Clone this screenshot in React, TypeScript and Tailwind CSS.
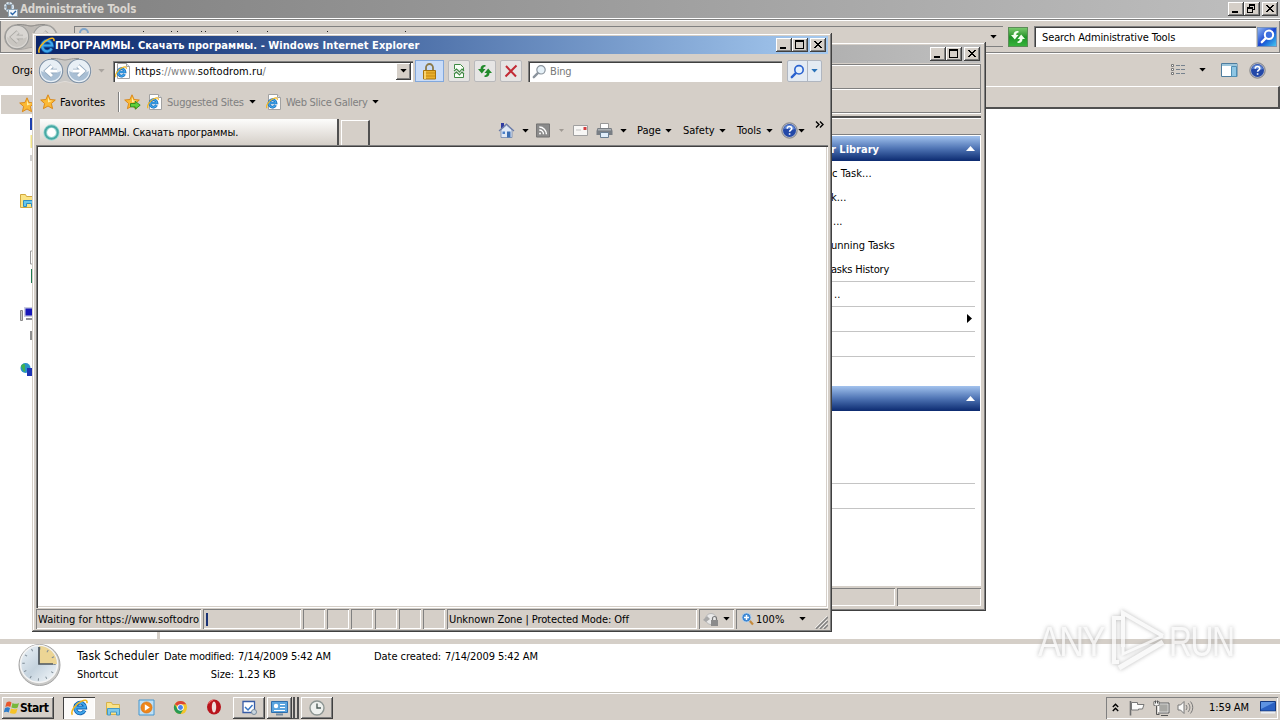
import React, { type ReactNode } from "react";
import clsx from "clsx";

const raised =
  "bg-[#d5cfc8] shadow-[inset_-1px_-1px_#404040,inset_1px_1px_#ffffff,inset_-2px_-2px_#808080]";
const frame =
  "bg-[#d5cfc8] shadow-[inset_-1px_-1px_#404040,inset_1px_1px_#d5cfc8,inset_-2px_-2px_#808080,inset_2px_2px_#ffffff]";
const sunken =
  "shadow-[inset_1px_1px_#808080,inset_-1px_-1px_#ffffff]";

function T({ c, flat, children }: { c?: string; flat?: boolean; children: ReactNode }) {
  return <span className={clsx("block shrink-0 whitespace-pre", !flat && "translate-y-px", c)}>{children}</span>;
}

function Tri({ c, color = "#000" }: { c?: string; color?: string }) {
  return (
    <svg className={clsx("block shrink-0", c)} width="7" height="4" viewBox="0 0 7 4">
      <path d="M0.3 0H6.7L3.5 3.6Z" fill={color} />
    </svg>
  );
}

function CaptionButton({ kind, c }: { kind: "min" | "max" | "restore" | "close"; c?: string }) {
  return (
    <div className={clsx("h-[14px] w-4 shrink-0", raised, c)}>
      <svg className="block" width="16" height="14" viewBox="0 0 16 14" fill="none" shapeRendering="crispEdges">
        {kind === "min" && <path d="M4 9h6v2H4z" fill="#000" />}
        {kind === "max" && <path d="M3 2h9v9H3zM4 4v6h7V4z" fill="#000" fillRule="evenodd" />}
        {kind === "restore" && (
          <path d="M5 2h6v6H9V7h1V4H6v1H5zM3 5h6v6H3zM4 7v3h4V7z" fill="#000" fillRule="evenodd" />
        )}
        {kind === "close" && (
          <path d="M4 3h2v1h1v1h2V4h1V3h2v1h-1v1h-1v1H9v1h1v1h1v1h1v1h-2V9H9V8H7v1H6v1H4V9h1V8h1V7h1V6H6V5H5V4H4z" fill="#000" />
        )}
      </svg>
    </div>
  );
}

function EGlyph({ x = 0, y = 0, s = 1 }: { x?: number; y?: number; s?: number }) {
  return (
    <g transform={`translate(${x} ${y}) scale(${s})`}>
      <path d="M12.800 10.800A4.700 5 0 1 1 13.300 8H4.800" fill="none" stroke="#0f5fae" strokeWidth="3.600" />
      <path d="M12.800 10.800A4.700 5 0 1 1 13.300 8H4.800" fill="none" stroke="#3fa5ea" strokeWidth="2" />
      <path d="M1.300 14.800C-.8 11.600 4.200 4.600 10 2c3.200-1.500 5.600-1.200 5 1.800" fill="none" stroke="#f2b51d" strokeWidth="1.500" />
    </g>
  );
}

function EIcon({ c, size = 17 }: { c?: string; size?: number }) {
  return (
    <svg className={clsx("block shrink-0", c)} width={size} height={size} viewBox="0 0 16 16">
      <EGlyph />
    </svg>
  );
}

function EPage({ c }: { c?: string }) {
  return (
    <svg className={clsx("block shrink-0", c)} width="16" height="16" viewBox="0 0 16 16">
      <path d="M2.500.5h9l3 3v12h-12z" fill="#fff" stroke="#a2a2a2" />
      <path d="M11.500.5v3h3" fill="#dde6ee" stroke="#a2a2a2" />
      <EGlyph x={0} y={3} s={0.75} />
    </svg>
  );
}

function Star({ c, arrow }: { c?: string; arrow?: boolean }) {
  return (
    <svg className={clsx("block shrink-0", c)} width="17" height="16" viewBox="0 0 17 16">
      <path
        d="M8 .8l2.100 4.700 5.200.5-3.900 3.500 1.200 5.200L8 12l-4.600 2.700 1.200-5.200L.7 6l5.200-.5z"
        fill="#fbb934"
        stroke="#d98311"
        strokeWidth=".9"
      />
      <path d="M8 3l1.300 3.500 3.200.3-4.500 1.700z" fill="#fff1a8" />
      {arrow && <path d="M6.500 9.500h4.700V7.200l5 4-5 4v-2.300H6.500z" fill="#5fd03a" stroke="#1f7d17" strokeWidth=".8" />}
    </svg>
  );
}

function NavCircles({ dim, c }: { dim?: boolean; c?: string }) {
  const rim = dim ? "#9a9a98" : "#7d90a5";
  const inner = dim ? "#c9c6c1" : "#a9bfd4";
  return (
    <svg className={clsx("block shrink-0", c)} width="54" height="28" viewBox="0 0 54 28">
      <path d="M13 1.500C22 1.500 24 3 27 3s5-1.500 14-1.500a12.500 12.500 0 0 1 0 25c-9 0-11-2-14-2s-5 2-14 2a12.500 12.500 0 0 1 0-25z" fill={dim ? "#bdb9b4" : "#c9c8c6"} stroke={dim ? "#a3a09c" : "#e4e1dd"} strokeWidth=".8" />
      <path d="M13 1.500C22 1.500 24 3 27 3s5-1.500 14-1.500" fill="none" stroke="#8f8d8a" strokeWidth="1" />
      {[13, 41].map((cx, i) => (
        <g key={cx}>
          <circle cx={cx} cy="14" r="11.700" fill={dim ? "#d9d6d2" : "#e8eff5"} stroke={rim} strokeWidth="1.100" />
          <path d={`M${cx - 10} 14a10 10 0 0 0 20 0c-5 3-15 3-20 0z`} fill={inner} />
          <path
            d={i === 0 ? `M${cx + 6} 14H${cx - 4}M${cx + 1} 9L${cx - 4.500} 14l5.500 5` : `M${cx - 6} 14H${cx + 4}M${cx - 1} 9L${cx + 4.500} 14l-5.500 5`}
            stroke={dim ? "#aaa8a4" : "#93a9be"}
            strokeWidth="4.600"
            fill="none"
          />
          <path
            d={i === 0 ? `M${cx + 6} 14H${cx - 4}M${cx + 1} 9L${cx - 4.500} 14l5.500 5` : `M${cx - 6} 14H${cx + 4}M${cx - 1} 9L${cx + 4.500} 14l-5.500 5`}
            stroke={dim ? "#d6d3cf" : "#fff"}
            strokeWidth="3"
            fill="none"
          />
        </g>
      ))}
    </svg>
  );
}

function Help({ c }: { c?: string }) {
  return (
    <svg className={clsx("block shrink-0", c)} width="17" height="17" viewBox="0 0 17 17">
      <circle cx="8.500" cy="8.500" r="7.700" fill="#b9bdcc" stroke="#77797f" strokeWidth=".9" />
      <circle cx="8.500" cy="8.500" r="6.500" fill="#2348a8" />
      <path d="M3 7a5.700 5.700 0 0 1 11 0C10 9 7 5 3 7z" fill="#5f86d4" />
      <path d="M6.200 6.700c0-2.800 4.600-2.800 4.600-.3 0 1.800-2.200 1.700-2.200 3.400M8.600 11.200v1.600" stroke="#fff" strokeWidth="1.600" fill="none" />
    </svg>
  );
}

function Magnifier({ c, stroke = "#2a62cf", fill = "#e4f0fc", width = 1.600 }: { c?: string; stroke?: string; fill?: string; width?: number }) {
  return (
    <svg className={clsx("block shrink-0", c)} width="15" height="15" viewBox="0 0 15 15">
      <path d="M6.300 8.700L1.800 13.200" stroke={stroke} strokeWidth="2.400" strokeLinecap="round" />
      <circle cx="9" cy="5.800" r="4.200" fill={fill} stroke={stroke} strokeWidth={width} />
    </svg>
  );
}

function Refresh({ color }: { color: string }) {
  return (
    <svg className="block" width="16" height="16" viewBox="0 0 16 16" fill={color}>
      <path d="M8.500 2C5.500 1.500 3.600 3 3.500 6H1l3.800 4.500L8.500 6H6.200C6.300 4.500 7 3.500 8.500 3.500z" />
      <path d="M7.500 14c3 .5 4.900-1 5-4H15l-3.800-4.500L7.500 10h2.300c-.1 1.500-.8 2.500-2.300 2.500z" />
    </svg>
  );
}

function ToolButton({ c, children }: { c?: string; children: ReactNode }) {
  return (
    <div className={clsx("flex h-[22px] w-[22px] shrink-0 items-center justify-center rounded-[2px] border border-[#b9b9bb] bg-[#e6e5e4]", c)}>
      {children}
    </div>
  );
}

function Explorer() {
  return (
    <div className="flex h-[692px] w-[1280px] flex-col bg-white">
      <div className="flex h-[18px] shrink-0 items-center bg-linear-to-r from-[#7f7f7f] to-[#bfbfbf] pl-[3px] pr-[2px]">
        <svg width="15" height="16" viewBox="0 0 15 16" className="shrink-0">
          <circle cx="6" cy="6" r="3.800" fill="none" stroke="#dbe8f2" strokeWidth="2.500" strokeDasharray="2.200 .8" />
          <circle cx="6" cy="6" r="3" fill="none" stroke="#8ea8bd" />
          <path d="M5.500 8.500h9v7h-9z" fill="#f4f8fb" stroke="#8fa5b5" />
          <path d="M7.500 11.500l2 2 3.500-3.500" fill="none" stroke="#2c66a8" strokeWidth="1.400" />
        </svg>
        <T flat c="ml-[2px] w-[1200px] text-[11.500px] font-bold tracking-[-0.150px] text-[#dad6d0]">Administrative Tools</T>
        <div className="ml-auto flex">
          <CaptionButton kind="min" />
          <CaptionButton kind="restore" />
          <CaptionButton kind="close" c="ml-[2px]" />
        </div>
      </div>
      <div className="mt-px flex h-[35px] shrink-0 items-center border-y border-t-[#808080] border-b-white bg-[#d5cfc8] pr-[3px] shadow-[inset_0_1px_#ffffff,inset_1px_0_#808080,inset_-1px_0_#808080,inset_0_-1px_#808080]">
        <NavCircles dim c="ml-[4px]" />
        <div className="ml-4 flex h-[21px] w-[929px] items-center border border-r-0 border-[#808080] pl-1">
          <svg width="900" height="20" viewBox="0 0 900 20" className="shrink-0" fill="#222">
            <circle cx="5" cy="6" r="4" fill="none" stroke="#7da4cb" strokeWidth="2" />
            {[64, 92, 98, 122, 126, 158, 188, 248, 326].map((x) => (
              <path key={x} d={`M${x} 4h1v1h-1z`} />
            ))}
          </svg>
          <Tri c="ml-[11px]" />
        </div>
        <div className="ml-[5px] flex h-5 w-5 items-center justify-center border border-[#5b8b57] bg-linear-to-b from-[#77c86c] via-[#1e9427] to-[#35b33a]">
          <Refresh color="#f3fff0" />
        </div>
        <div className="ml-[6px] flex h-[21px] w-[222px] items-center bg-white pl-[8px] shadow-[inset_1px_1px_#808080,inset_2px_2px_#404040,inset_-1px_-1px_#fff]">
          <T c="tracking-[-0.120px]">Search Administrative Tools</T>
        </div>
        <div className="ml-px flex h-5 w-[20px] shrink-0 items-center justify-center border border-[#7c94b8] bg-linear-to-br from-[#92b3ef] via-[#1e45d0] to-[#49c4ee]">
          <Magnifier stroke="#ffffff" fill="#3d6fe0" width={2} />
        </div>
      </div>
      <div className="flex h-[32px] shrink-0 items-center bg-[#d5cfc8] pl-3">
        <T c="w-[1156px]">Organize</T>
        <svg width="17" height="14" viewBox="0 0 17 14" className="ml-[2px] shrink-0" fill="none" stroke="#777">
          <path d="M1.500 1.500h2v2h-2zM1.500 5.500h2v2h-2zM1.500 9.500h2v2h-2z" fill="#fff" />
          <path d="M6 2.500h4M11 2.500h4M6 6.500h4M11 6.500h4M6 10.500h4M11 10.500h4" stroke="#76828e" />
        </svg>
        <Tri c="ml-[12px]" />
        <svg width="17" height="15" viewBox="0 0 17 15" className="ml-[15px] shrink-0">
          <path d="M.5.5h15.500v13H.5z" fill="#fff" stroke="#4e7d9e" />
          <path d="M1 1h15v2H1z" fill="#9cc6dc" />
          <path d="M10.500 3.500h5v10h-5z" fill="#8ec6e4" stroke="#4e8fb5" />
        </svg>
        <Help c="ml-[11px]" />
      </div>
      <div className="flex min-h-0 flex-1">
        <div className="w-[160px] shrink-0">
          <div className="ml-px mt-[9px] flex h-[19px] items-center bg-[#d5cfc8] pl-[18px]">
            <Star />
          </div>
          <svg width="40" height="270" viewBox="0 0 40 270" className="block">
            <path d="M30 4h3v12h-3z" fill="#1d3fae" />
            <path d="M30.500 21h3v13h-3z" fill="#f1e58a" />
            <path d="M30 41h3v6h-3z" fill="#d0d0d0" />
            <path d="M20.500 80.500h5l1 2h8v11h-14z" fill="#fbe484" stroke="#d2a83e" />
            <path d="M23.500 86.500h11v6h-3v-3h-5v3h-3z" fill="#66c6ec" stroke="#2f8cc0" />
            <path d="M30.500 137v13h3v-13z" fill="#fff" stroke="#9a9a9a" />
            <path d="M31 155h2v14h-2z" fill="#1f7a50" />
            <path d="M20.500 196.500h2v10h-2z" fill="#c8c8c8" stroke="#888" />
            <path d="M24 193h10v10H24z" fill="#c9ccdf" />
            <path d="M25.500 194.500h8v7h-8z" fill="#1616b8" />
            <path d="M26 204h7v2h-7z" fill="#8d8d96" />
            <path d="M30 217h3v9h-3z" fill="#8e8e8e" />
            <circle cx="25.500" cy="254" r="5" fill="#2992c8" />
            <path d="M21 252c3-4 5-1 4 1s2 4-1 5z" fill="#3fb24e" />
            <path d="M27 254h7v8h-7z" fill="#1d33b4" />
          </svg>
        </div>
        <div className="flex-1">
          <div className="h-[23px] border-b-2 border-r-2 border-t border-b-[#505050] border-r-[#505050] border-t-white bg-[#d5cfc8]" />
        </div>
      </div>
      <div className="flex h-[8px] shrink-0 pl-[157px]">
        <div className="w-[3px] bg-[#d5cfc8]" />
      </div>
      <div className="h-[5px] shrink-0 bg-[#d5cfc8]" />
      <div className="flex h-[48px] shrink-0">
        <svg width="44" height="44" viewBox="0 0 44 44" className="-mt-px ml-[17px] shrink-0">
          <defs>
            <linearGradient id="face" x1="0" y1="0" x2="1" y2="1">
              <stop offset="0" stopColor="#eef4f9" />
              <stop offset=".5" stopColor="#c5d3de" />
              <stop offset="1" stopColor="#f8fbfd" />
            </linearGradient>
          </defs>
          <circle cx="22.500" cy="22" r="20.500" fill="#c9c9c7" stroke="#a4a4a4" />
          <circle cx="22" cy="21" r="18.500" fill="url(#face)" stroke="#f5f5f5" strokeWidth="1.500" />
          <path d="M22 21V3a18 18 0 0 1 18 18z" fill="#ecd595" />
          <circle cx="22" cy="21" r="15.500" fill="none" stroke="#7f8c96" strokeWidth="2.500" strokeDasharray="1 7.115" />
          <path d="M22 4v17h14" fill="none" stroke="#4c555d" strokeWidth="1.700" />
        </svg>
        <div className="ml-[16px] w-[82px] shrink-0 pt-1">
          <T flat c="h-[18px] text-[12px] leading-[17px] tracking-[0.100px]">Task Scheduler</T>
          <T flat c="h-[18px] leading-[17px] tracking-[-0.150px]">Shortcut</T>
        </div>
        <div className="ml-[1px] w-[74px] shrink-0 pt-1 text-right">
          <T flat c="h-[18px] leading-[17px] tracking-[-0.250px]">Date modified:</T>
          <T flat c="h-[18px] leading-[17px] tracking-[-0.100px]">Size:</T>
        </div>
        <div className="ml-1 w-[136px] shrink-0 pt-1">
          <T flat c="h-[18px] leading-[17px] tracking-[-0.100px]">7/14/2009 5:42 AM</T>
          <T flat c="h-[18px] leading-[17px] tracking-[-0.100px]">1.23 KB</T>
        </div>
        <T flat c="w-[71px] pt-1 leading-[17px] tracking-[-0.050px]">Date created:</T>
        <T flat c="pt-1 leading-[17px] tracking-[-0.100px]">7/14/2009 5:42 AM</T>
      </div>
    </div>
  );
}

function ActionHeader({ title }: { title: string }) {
  return (
    <div className="flex h-[25px] shrink-0 items-center bg-linear-to-b from-[#a3c3ee] via-[#4f74b4] to-[#0c2a70] text-white">
      <T c="w-[132px] text-[11px] font-bold">{title}</T>
      <svg width="9" height="5" viewBox="0 0 9 5" className="ml-[3px]">
        <path d="M0 5L4.500 0 9 5z" fill="#fff" />
      </svg>
    </div>
  );
}

function SchedulerWindow() {
  const row = "h-6 leading-[24px]";
  return (
    <div className={clsx("absolute left-[820px] top-[42px] flex h-[569px] w-[166px] flex-col p-[3px] pr-[5px]", frame)}>
      <div className="flex h-[18px] shrink-0 items-center justify-end bg-linear-to-r from-[#b0b0b0] to-[#bfbfbf] pr-px">
        <CaptionButton kind="min" />
        <CaptionButton kind="max" />
        <CaptionButton kind="close" c="ml-[2px]" />
      </div>
      <div className="mt-px h-[25px] shrink-0 border-b border-r border-t border-[#808080] shadow-[inset_0_1px_#ffffff]" />
      <div className="h-6 shrink-0 border-b border-r border-[#808080] shadow-[inset_0_1px_#ffffff,0_1px_#ffffff]" />
      <div className="mt-[3px] h-[19px] shrink-0 border-b border-t-2 border-b-[#808080] border-t-[#505050] shadow-[inset_0_1px_#ffffff]" />
      <div className="flex h-[451px] shrink-0 flex-col border-r border-t border-white bg-white pl-[8px] shadow-[0_1px_#d5cfc8]">
        <ActionHeader title="r Library" />
        <div className="mr-[5px]">
          <T c={clsx(row, "pl-px tracking-[0.060px]")}>c Task...</T>
          <T c={clsx(row, "tracking-[0.100px]")}>k...</T>
          <T c={clsx(row, "pl-[2px]")}>...</T>
          <T c={row}>unning Tasks</T>
          <T c={clsx(row, "tracking-[-0.200px]")}>asks History</T>
          <T flat c="h-[25px] border-t border-[#c4c4c4] pl-[3px] leading-[25px]">..</T>
          <div className="flex h-[25px] items-center justify-end border-t border-[#c4c4c4] pb-px pr-[3px]">
            <svg width="5" height="9" viewBox="0 0 5 9">
              <path d="M0 0l5 4.500L0 9z" fill="#000" />
            </svg>
          </div>
          <div className="h-[25px] border-t border-[#c4c4c4]" />
          <div className="h-[30px] border-t border-[#c4c4c4]" />
        </div>
        <ActionHeader title="" />
        <div className="mr-[5px] mt-[72px] h-[26px] shrink-0 border-y border-[#c4c4c4]" />
      </div>
      <div className="mt-[2px] flex h-[18px] shrink-0 gap-[2px]">
        <div className={clsx("w-[72px]", sunken)} />
        <div className={clsx("flex-1", sunken)} />
      </div>
    </div>
  );
}

function StatusCell({ c, children }: { c: string; children?: ReactNode }) {
  return <div className={clsx("mr-[2px] flex h-[20px] shrink-0 items-center overflow-hidden", sunken, c)}>{children}</div>;
}

function BrowserWindow() {
  return (
    <div className={clsx("absolute left-[32px] top-[33px] flex h-[599px] w-[800px] flex-col p-[3px] pl-[4px] pr-[4px]", frame)}>
      <div className="flex h-[18px] shrink-0 items-center bg-linear-to-r from-[#0a246a] to-[#a6caf0] pl-[2px] pr-[2px]">
        <EIcon />
        <T c="w-[600px] text-[11px] font-bold tracking-[0.060px] text-white">ПРОГРАММЫ. Скачать программы. - Windows Internet Explorer</T>
        <div className="ml-auto flex">
          <CaptionButton kind="min" />
          <CaptionButton kind="max" />
          <CaptionButton kind="close" c="ml-[2px]" />
        </div>
      </div>

      <div className="flex h-[34px] shrink-0 items-center pl-[2px]">
        <NavCircles />
        <Tri c="ml-[6px]" color="#aaa5a0" />
        <div className="ml-[8px] flex h-[21px] w-[300px] items-center bg-white pl-[2px] pr-[2px] shadow-[inset_1px_1px_#808080,inset_2px_2px_#404040,inset_-1px_-1px_#fff]">
          <EPage />
          <T c="ml-[4px] flex-1 tracking-[0.080px] text-[#808080]">
            <span className="text-black">https</span>://www.<span className="text-black">softodrom.ru</span>/
          </T>
          <div className={clsx("flex h-[17px] w-[15px] items-center justify-center", raised)}>
            <Tri />
          </div>
        </div>
        <div className="ml-[2px] flex h-[22px] w-[29px] items-center justify-center border border-[#82a8dc] bg-[#c9dcf8]">
          <svg width="15" height="17" viewBox="0 0 15 17">
            <path d="M4 8V4.500a3.500 3.500 0 0 1 7 0V8" fill="none" stroke="#8b7a4a" strokeWidth="1.800" />
            <path d="M1.500 7.500h12v8.500h-12z" fill="#eab02c" stroke="#a8730c" />
            <path d="M2 10h11M2 13h11" stroke="#c78a14" />
            <path d="M3 8v8" stroke="#ffe38a" strokeWidth="1.500" />
          </svg>
        </div>
        <ToolButton c="ml-[4px]">
          <svg width="14" height="16" viewBox="0 0 14 16" fill="none" stroke="#3e8a43">
            <path d="M2.500 6V1.500h6l3 3V7M2.500 11v3.500h9V11" fill="#f7fff6" />
            <path d="M2 8l2.500-2 3 3 2.500-3 2 2M2 11l2.500-2 3 3 2.500-3 2 2" strokeWidth="1.100" />
          </svg>
        </ToolButton>
        <ToolButton c="ml-[4px]">
          <Refresh color="#228a2b" />
        </ToolButton>
        <ToolButton c="ml-[4px]">
          <svg width="14" height="14" viewBox="0 0 14 14">
            <path d="M2 2l10 10.500M12.500 1.500L1.500 12.500" stroke="#c22b35" strokeWidth="2" />
          </svg>
        </ToolButton>
        <div className="ml-[6px] flex h-[21px] w-[254px] items-center bg-white pl-[4px] shadow-[inset_1px_1px_#808080,inset_2px_2px_#404040,inset_-1px_-1px_#fff]">
          <Magnifier stroke="#8b949d" fill="#e6f1f8" width={1.2} />
          <T c="ml-[3px] tracking-[-0.150px] text-[#787878]">Bing</T>
        </div>
        <div className="ml-[5px] flex h-[22px] w-[35px] items-center rounded-[2px] border border-[#b0b6c0] bg-[#e4ebf3]">
          <div className="flex h-full w-[20px] items-center justify-center border-r border-[#b0b6c0]">
            <Magnifier />
          </div>
          <Tri c="ml-[3px]" color="#2a72b8" />
        </div>
      </div>

      <div className="flex h-[28px] shrink-0 items-center pl-[4px]">
        <Star />
        <T c="ml-[3px] w-[58px] tracking-[0.080px]">Favorites</T>
        <div className="h-[20px] w-[2px] border-l border-r border-l-[#808080] border-r-white" />
        <Star arrow c="ml-[4px]" />
        <EPage c="ml-[6px]" />
        <T c="ml-[4px] w-[82px] tracking-[-0.210px] text-[#808080]">Suggested Sites</T>
        <Tri />
        <EPage c="ml-[10px]" />
        <T c="ml-[4px] w-[86px] tracking-[-0.280px] text-[#808080]">Web Slice Gallery</T>
        <Tri />
      </div>

      <div className="flex h-[29px] shrink-0 items-start pl-[4px]">
        <div className="mt-[3px] flex h-[26px] w-[299px] shrink-0 items-center border-r-2 border-[#505050] bg-linear-to-b from-[#fdfdfc] to-[#d5cfc8] pl-[3px]">
          <svg width="17" height="17" viewBox="0 0 17 17">
            <circle cx="8.500" cy="8.500" r="6.300" fill="#fff" stroke="#a5dbd6" strokeWidth="3.800" />
            <circle cx="8.500" cy="8.500" r="6.300" fill="none" stroke="#47a9a4" strokeWidth="2" />
          </svg>
          <T c="ml-[2px] tracking-[-0.130px]">ПРОГРАММЫ. Скачать программы.</T>
        </div>
        <div className="ml-[2px] mt-[4px] h-[25px] w-[29px] shrink-0 border-l border-r-2 border-t border-l-white border-r-[#505050] border-t-white" />
        <div className="ml-[128px] flex h-[29px] items-center">
          <svg width="17" height="17" viewBox="0 0 17 17" className="shrink-0">
            <path d="M3 1h3v5H3z" fill="#2f3ba2" />
            <path d="M3 8l5.500-5 5.500 5v7.500H3z" fill="#dfe8f5" stroke="#7087ac" strokeWidth=".8" />
            <path d="M1 9l7.500-7L16 9" fill="none" stroke="#6a7ba8" strokeWidth="1.100" />
            <path d="M9 9.500h3.500v6H9z" fill="#3b6fb4" />
            <path d="M4.500 9.500h2.500v2.500H4.500z" fill="#4a80c8" />
          </svg>
          <Tri c="ml-[7px]" />
          <svg width="14" height="15" viewBox="0 0 15 15" className="ml-[7px] shrink-0" fill="none" stroke="#fff">
            <path d="M.5.5h14v14H.5z" fill="#8b8b8b" stroke="#6f6f6f" />
            <path d="M3.500 7a4.500 4.500 0 0 1 4.500 4.500M3.500 3.800A7.700 7.700 0 0 1 11.200 11.500" strokeWidth="1.500" />
            <circle cx="4.300" cy="10.700" r="1" fill="#fff" stroke="none" />
          </svg>
          <svg width="5" height="3" viewBox="0 0 5 3" className="ml-[9px] shrink-0">
            <path d="M0 0h5L2.500 3z" fill="#a09a94" />
          </svg>
          <svg width="15" height="11" viewBox="0 0 15 11" className="ml-[9px] shrink-0">
            <path d="M.5.5h14v10H.5z" fill="#f8f7f5" stroke="#a0a0a0" />
            <path d="M10.500 2h3v3h-3z" fill="#d33f3f" />
            <path d="M3 5h5" stroke="#c3c3c3" />
          </svg>
          <svg width="17" height="15" viewBox="0 0 17 15" className="ml-[8px] shrink-0">
            <path d="M4.500.5h8v5h-8z" fill="#fff" stroke="#999" />
            <path d="M1.500 5h14l1 3v4H.5V8z" fill="#797e84" />
            <path d="M2 6h13v1.500H2z" fill="#adb2b6" />
            <path d="M4.500 9.500h8v5h-8z" fill="#e0eefa" stroke="#6a7f92" />
          </svg>
          <Tri c="ml-[7px]" />
          <T flat c="ml-[10px] w-[28px]">Page</T>
          <Tri />
          <T flat c="ml-[11px] w-[36px]">Safety</T>
          <Tri />
          <T flat c="ml-[11px] w-[29px]">Tools</T>
          <Tri />
          <Help c="ml-[8px]" />
          <Tri />
          <svg width="9" height="7" viewBox="0 0 9 7" className="mb-[13px] ml-[10px] shrink-0" fill="none" stroke="#000" strokeWidth="1.400">
            <path d="M1 .5l3 3-3 3M5 .5l3 3-3 3" />
          </svg>
        </div>
      </div>

      <div className="h-[463px] shrink-0 bg-white shadow-[inset_1px_1px_#808080,inset_2px_2px_#404040,inset_-1px_-1px_#ffffff,inset_-2px_-2px_#d5cfc8]" />

      <div className="mt-[1px] flex h-[20px] shrink-0">
        <StatusCell c="w-[165px] pl-[2px]">
          <T c="tracking-[0.050px]">Waiting for https://www.softodro</T>
        </StatusCell>
        <StatusCell c="w-[98px] pl-[3px]">
          <div className="h-[13px] w-[2px] bg-[#1a3375]" />
        </StatusCell>
        <StatusCell c="w-[22px]" />
        <StatusCell c="w-[22px]" />
        <StatusCell c="w-[22px]" />
        <StatusCell c="w-[22px]" />
        <StatusCell c="w-[22px]" />
        <StatusCell c="w-[22px]" />
        <StatusCell c="w-[250px] pl-[2px]">
          <T c="tracking-[-0.080px]">Unknown Zone | Protected Mode: Off</T>
        </StatusCell>
        <StatusCell c="w-[35px] pl-[4px]">
          <svg width="16" height="14" viewBox="0 0 16 14">
            <circle cx="8" cy="7" r="5.500" fill="#e9e9e9" stroke="#b7b7b7" />
            <path d="M0 8l4-4 3 3-4 3z" fill="#a9a9a9" />
            <path d="M8 8h7v6H8z" fill="#8b8b8b" />
            <path d="M9.500 8V6.500a2 2 0 0 1 4 0V8" fill="none" stroke="#777" strokeWidth="1.200" />
          </svg>
          <Tri c="ml-[4px]" />
        </StatusCell>
        <div className="flex h-[20px] flex-1 items-center pl-[5px] shadow-[inset_1px_1px_#808080]">
          <svg width="13" height="14" viewBox="0 0 13 14" className="shrink-0">
            <path d="M8 8l4 4.500" stroke="#c58a3c" strokeWidth="2.200" />
            <circle cx="5.500" cy="5.500" r="4.600" fill="#3c86d2" stroke="#bfd7ee" />
            <path d="M3 5.500h5M5.500 3v5" stroke="#fff" strokeWidth="1.500" />
          </svg>
          <T c="ml-[2px] w-[43px]">100%</T>
          <Tri />
          <svg width="13" height="13" viewBox="0 0 13 13" className="ml-auto mt-[7px]" fill="none">
            <path d="M1 13L13 1M5 13l8-8M9 13l4-4" stroke="#808080" strokeWidth="1.500" />
            <path d="M0 12L12 0M4 12l8-8M8 12l4-4" stroke="#fff" strokeWidth=".6" />
          </svg>
        </div>
      </div>
    </div>
  );
}

function TaskbarButton({ children, c }: { children: ReactNode; c?: string }) {
  return <div className={clsx("mt-[2px] flex h-[22px] shrink-0 items-center justify-center", raised, c)}>{children}</div>;
}

function Taskbar() {
  return (
    <div className="flex h-[28px] w-[1280px] items-center border-t border-[#c4c1b8] bg-[#d5cfc8] pl-[2px] shadow-[inset_0_1px_#ffffff]">
      <div className={clsx("mt-[2px] flex h-[22px] w-[52px] shrink-0 items-center pl-[2px]", raised)}>
        <svg width="16" height="15" viewBox="0 0 16 15" className="shrink-0">
          <path d="M2.500 2.500c2-1.300 3.500-1.200 5 0L6.300 7c-1.600-1-3-1-5 0z" fill="#e9572b" />
          <path d="M8.500 3c2 1.100 4 1.200 6.500 0l-1.300 4.500c-2 1.200-4.200 1-6.300 0z" fill="#76b83b" />
          <path d="M1 8c2-1.200 3.500-1 5 0l-1.300 4.500c-1.500-1-3.200-1-5 0z" fill="#2f7dc9" />
          <path d="M7 8.500c2 1 4 1.200 6.500 0L12.200 13c-2 1.200-4.200 1-6.300 0z" fill="#f7c327" />
        </svg>
        <T flat c="text-[12px] font-bold tracking-[-0.450px]">Start</T>
      </div>
      <div className="ml-[9px] mt-[2px] flex h-[22px] w-[32px] shrink-0 items-center justify-center bg-[#fbfaf9] shadow-[inset_1px_1px_#404040,inset_-1px_-1px_#ffffff]">
        <EIcon />
      </div>
      <svg width="16" height="16" viewBox="0 0 16 16" className="ml-[10px] mt-[2px] shrink-0">
        <path d="M1.500 2.500h5l1 2h7v10h-13z" fill="#fbe388" stroke="#d6b24b" />
        <path d="M2.500 8.500h12v6.500h-3v-3h-6v3h-3z" fill="#7cc8ea" stroke="#4598c6" />
      </svg>
      <svg width="17" height="17" viewBox="0 0 17 17" className="ml-[17px] mt-px shrink-0">
        <path d="M1 1h15v15H1z" fill="#bfe0f5" stroke="#4596cf" />
        <circle cx="8.500" cy="8.500" r="5.600" fill="#ee861b" stroke="#cf6a0d" strokeWidth=".6" />
        <path d="M6.800 5.300v6.400l5-3.200z" fill="#fff" />
      </svg>
      <svg width="15" height="15" viewBox="0 0 16 16" className="ml-[18px] mt-px shrink-0">
        <circle cx="8" cy="8" r="7" fill="#f3c52b" />
        <path d="M8 8L1.900 4.500A7 7 0 0 1 14.100 4.500H8z" fill="#dc4437" />
        <path d="M8 8l-3 2L1.900 4.500A7 7 0 0 0 8 15l3-5z" fill="#279a55" />
        <circle cx="8" cy="8" r="3.500" fill="#fff" />
        <circle cx="8" cy="8" r="2.600" fill="#4783ec" />
      </svg>
      <svg width="16" height="16" viewBox="0 0 16 16" className="ml-[18px] mt-px shrink-0">
        <ellipse cx="8" cy="8" rx="7" ry="7.500" fill="#b8141c" />
        <ellipse cx="8" cy="8" rx="2.200" ry="5.500" fill="#efdedc" />
        <path d="M2.500 4.500A7 7 0 0 1 7 1" fill="none" stroke="#ee6a66" strokeWidth="1.200" />
      </svg>
      <TaskbarButton c="ml-[11px] w-[32px]">
        <svg width="17" height="16" viewBox="0 0 17 16">
          <path d="M2 1.500h11.500v11H2z" fill="#fff" stroke="#385da7" strokeWidth="1.300" />
          <path d="M4 7l3 3 4.500-5" fill="none" stroke="#3876c4" strokeWidth="1.500" />
          <circle cx="13" cy="12" r="2.500" fill="#c9d6df" stroke="#7a8c9c" />
        </svg>
      </TaskbarButton>
      <TaskbarButton c="ml-[2px] w-[25px]">
        <svg width="17" height="16" viewBox="0 0 17 16">
          <path d="M.5 1.500h16v11H.5z" fill="#5aa4de" stroke="#2f6eac" />
          <circle cx="5" cy="6" r="2.200" fill="#fff" />
          <path d="M9 4.500h5M9 7.500h5M3 10.500h11" stroke="#fff" strokeWidth="1.200" />
          <path d="M5 14.500h7" stroke="#748ba0" strokeWidth="2" />
        </svg>
      </TaskbarButton>
      <div className="mt-[2px] h-[22px] w-[3px] shrink-0 border-b border-r-2 border-[#505050]" />
      <div className="mt-[2px] h-[22px] w-[4px] shrink-0 border-b border-r-2 border-[#505050]" />
      <TaskbarButton c="ml-[2px] w-[32px]">
        <svg width="16" height="16" viewBox="0 0 16 16">
          <circle cx="8" cy="8" r="7" fill="#eef1ee" stroke="#8d9693" strokeWidth="1.400" />
          <path d="M8 3.500V8h4" fill="none" stroke="#4e5d59" strokeWidth="1.400" />
        </svg>
      </TaskbarButton>
      <div className={clsx("ml-auto mr-[2px] mt-[2px] flex h-[22px] w-[172px] shrink-0 items-center pl-[6px]", sunken)}>
        <svg width="7" height="9" viewBox="0 0 7 9" fill="none" stroke="#000" strokeWidth="1.400">
          <path d="M.8 4l2.700-2.700L6.200 4M.8 8l2.700-2.700L6.200 8" />
        </svg>
        <svg width="17" height="16" viewBox="0 0 17 16" className="ml-[10px]">
          <path d="M1.500 1v14.500" stroke="#6f6f6f" strokeWidth="1.600" />
          <path d="M2.500 2.500h6v2h6.500l-1.500 4.500h-4v1h-7z" fill="#fbfbfa" stroke="#777" />
        </svg>
        <svg width="17" height="16" viewBox="0 0 17 16" className="ml-[7px]">
          <path d="M5.500 3.500h10v9h-10z" fill="#a8a8a4" stroke="#fff" strokeWidth="1.500" />
          <path d="M5 3h11v10H5M8 15.500h7M1 1.500h5v4H1zM3.500 5.500v9h3" fill="none" stroke="#555" />
          <path d="M1.500 1.500h4v4h-4z" fill="#f5f5f3" />
          <path d="M2.500.5v3M4.500.5v3" stroke="#555" />
        </svg>
        <svg width="17" height="15" viewBox="0 0 17 15" className="ml-[7px]" fill="none" stroke="#777">
          <path d="M1 5h2.500L7 1.500v12L3.500 10H1z" fill="#fbfbfa" />
          <path d="M9 5c1.200 1.500 1.200 3.500 0 5M11.200 3.200c2.200 2.600 2.200 6 0 8.600M13.400 1.500c3.100 3.500 3.100 8.500 0 12" />
        </svg>
        <T flat c="ml-[15px] w-[51px] tracking-[-0.100px]">1:59 AM</T>
        <svg width="16" height="13" viewBox="0 0 16 13" className="shrink-0">
          <path d="M.5.5h15v9.500H.5z" fill="#2b61c2" stroke="#153a80" />
          <path d="M1 1h14L1 8z" fill="#5e93e1" />
          <path d="M1 11.500h14" stroke="#e9edf3" strokeWidth="2" />
        </svg>
      </div>
    </div>
  );
}

function Watermark() {
  return (
    <div className="absolute left-[1038px] top-[608px] flex h-[66px] w-[200px] items-center text-[#f8f8f8] opacity-80 drop-shadow-[0_0_2px_#aaaaaa]">
      <span className="block w-[71px] origin-left scale-x-[0.8] whitespace-nowrap font-['Liberation_Sans'] text-[43px] leading-[40px] tracking-[-2px]">ANY</span>
      <svg width="56" height="64" viewBox="0 0 56 64" fill="none" stroke="#f8f8f8" strokeWidth="4" className="shrink-0">
        <path d="M14 38V4l40 23M13 9H5v44h5" />
        <path d="M14 38v7l40-18" strokeWidth="3" />
        <path d="M10 59l44-26" strokeWidth="5" />
      </svg>
      <span className="ml-[4px] block w-[66px] origin-left scale-x-[0.74] whitespace-nowrap font-['Liberation_Sans'] text-[43px] leading-[40px] tracking-[-2px]">RUN</span>
    </div>
  );
}

export default function App() {
  return (
    <div className="relative h-[720px] w-[1280px] overflow-hidden bg-white font-['DejaVu_Sans_Condensed','DejaVu_Sans',sans-serif] text-[11px] leading-[14px] text-black [font-stretch:condensed]">
      <Explorer />
      <Taskbar />
      <SchedulerWindow />
      <BrowserWindow />
      <Watermark />
    </div>
  );
}
